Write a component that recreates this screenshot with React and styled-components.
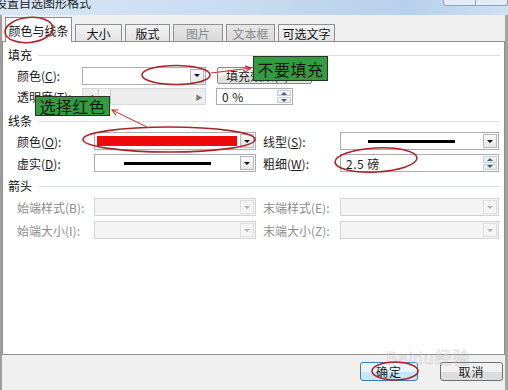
import React from "react";
import styled, { createGlobalStyle } from "styled-components";

const GlobalStyle = createGlobalStyle`
  html, body {
    margin: 0;
    padding: 0;
  }
  body {
    width: 508px;
    height: 390px;
    overflow: hidden;
    background: #f0f0f0;
    font-family: "Noto Sans CJK SC", "Liberation Sans", sans-serif;
    font-size: 12px;
    color: #1a1a1a;
  }
`;

const Window = styled.div`
  position: relative;
  width: 508px;
  height: 390px;
  display: flex;
  flex-direction: column;
  background: #f0f0f0;
  overflow: hidden;
`;

const TitleBar = styled.div`
  height: 15px;
  flex: none;
  display: flex;
  align-items: flex-end;
  overflow: hidden;
  background: linear-gradient(90deg, #d8e6f5 0%, #cadcf0 45%, #b7d0ec 80%, #cfe0f2 100%);
`;

const TitleText = styled.span`
  font-size: 12px;
  line-height: 12px;
  margin-left: -5px;
  margin-bottom: 6px;
  color: #222;
  white-space: nowrap;
`;

const TitleButtons = styled.div`
  margin-left: auto;
  align-self: flex-start;
  width: 63px;
  height: 5px;
  display: flex;
  border: 1px solid #8ea2bb;
  border-top: none;
  border-radius: 0 0 3px 3px;
  background: #e4edf7;
  span {
    flex: 1;
    border-right: 1px solid #8ea2bb;
  }
  span:last-child {
    border-right: none;
  }
`;

const Frame = styled.div`
  flex: 1;
  display: flex;
  flex-direction: column;
  border-left: 2px solid #9d9d9d;
  border-right: 3px solid #a3a3a3;
`;

const TabRow = styled.div`
  display: flex;
  align-items: flex-end;
  height: 24px;
  margin-top: 2px;
  padding-left: 3px;
`;

const Tab = styled.div`
  position: relative;
  z-index: ${(p) => (p.$active ? 1 : 0)};
  width: ${(p) => p.$w}px;
  height: ${(p) => (p.$active ? 25 : 17)}px;
  margin-bottom: ${(p) => (p.$active ? -1 : 0)}px;
  margin-left: ${(p) => (p.$first ? 0 : 3)}px;
  box-sizing: border-box;
  display: flex;
  align-items: center;
  justify-content: center;
  border: 1px solid #8e8f8f;
  border-bottom: none;
  background: ${(p) =>
    p.$active ? "#fff" : p.$disabled ? "linear-gradient(#e6e6e6, #d9d9d9)" : "linear-gradient(#f3f3f3, #e3e3e3)"};
  color: ${(p) => (p.$disabled ? "#8a8a8a" : "#111")};
  font-size: 12px;
  padding-top: ${(p) => (p.$active ? 0 : 1)}px;
`;

const Panel = styled.div`
  height: 314px;
  box-sizing: border-box;
  background: #fff;
  border: 1px solid #8e8f8f;
  display: flex;
  flex-direction: column;
`;

const SectionHead = styled.div`
  display: flex;
  align-items: center;
  gap: 6px;
  height: 14px;
  line-height: 14px;
  margin-top: ${(p) => p.$top}px;
  padding: 0 4px 0 5px;
  color: #111;
  &::after {
    content: "";
    flex: 1;
    border-top: 1px solid #dadfe3;
  }
`;

const FillRows = styled.div`
  display: flex;
  flex-direction: column;
  gap: 4px;
  margin-top: 5px;
  padding-left: 14px;
`;

const FillRow = styled.div`
  display: flex;
  align-items: center;
  height: 17px;
`;

const Grid = styled.div`
  display: grid;
  grid-template-columns: 77px 162px 7px 77px 159px;
  grid-auto-rows: 18px;
  row-gap: ${(p) => p.$gap}px;
  margin-top: ${(p) => p.$top}px;
  padding-left: 14px;
  align-items: center;
`;

const Label = styled.span`
  width: ${(p) => (p.$w ? `${p.$w}px` : "auto")};
  flex: none;
  white-space: nowrap;
  color: ${(p) => (p.$disabled ? "#8c8c8c" : "#1a1a1a")};
  u {
    text-decoration: underline;
  }
`;

const Spacer = styled.span``;

const Select = styled.div`
  display: flex;
  width: ${(p) => (p.$w ? `${p.$w}px` : "auto")};
  height: ${(p) => p.$h || 18}px;
  margin-left: ${(p) => p.$ml || 0}px;
  box-sizing: border-box;
  border: 1px solid ${(p) => (p.$disabled ? "#d3d3d3" : "#a9acb2")};
  background: ${(p) => (p.$disabled ? "#f4f4f4" : "#fff")};
`;

const SelectValue = styled.div`
  flex: 1;
  display: flex;
  align-items: center;
  justify-content: ${(p) => p.$justify || "center"};
  padding: 2px;
  min-width: 0;
`;

const DropButton = styled.div`
  width: 14px;
  flex: none;
  margin: 1px;
  box-sizing: border-box;
  border: 1px solid ${(p) => (p.$disabled ? "#dedede" : "#b8b8b8")};
  background: ${(p) => (p.$disabled ? "#f4f4f4" : "linear-gradient(#fbfbfb, #e6e6e6)")};
  display: flex;
  align-items: center;
  justify-content: center;
  &::after {
    content: "";
    border-left: 3px solid transparent;
    border-right: 3px solid transparent;
    border-top: 3px solid ${(p) => (p.$disabled ? "#b0b0b0" : "#111")};
  }
`;

const Swatch = styled.div`
  width: 100%;
  height: 10px;
  background: #ec0a0a;
`;

const LineSample = styled.div`
  width: 87px;
  height: 3px;
  background: #000;
`;

const SpinText = styled.span`
  padding-left: 3px;
  color: #1a1a1a;
  letter-spacing: 0.5px;
`;

const SpinButtons = styled.div`
  width: 14px;
  flex: none;
  margin: 1px;
  display: flex;
  flex-direction: column;
  gap: 1px;
  span {
    flex: 1;
    display: flex;
    align-items: center;
    justify-content: center;
    border: 1px solid #c6cfda;
    background: linear-gradient(#f4f7fb, #e1e8f1);
  }
  span:first-child::after {
    content: "";
    border-left: 3px solid transparent;
    border-right: 3px solid transparent;
    border-bottom: 3px solid #4d5a6a;
  }
  span:last-child::after {
    content: "";
    border-left: 3px solid transparent;
    border-right: 3px solid transparent;
    border-top: 3px solid #4d5a6a;
  }
`;

const PushButton = styled.div`
  width: 95px;
  height: 17px;
  margin-left: 11px;
  box-sizing: border-box;
  border: 1px solid #8a8a8a;
  border-radius: 2px;
  background: linear-gradient(#f4f4f4 50%, #e2e2e2 50%);
  display: flex;
  align-items: center;
  padding-left: 8px;
  white-space: nowrap;
  overflow: hidden;
`;

const Slider = styled.div`
  width: 124px;
  height: 17px;
  box-sizing: border-box;
  border: 1px solid #d8d8d8;
  background: #ececec;
  display: flex;
  align-items: stretch;
`;

const SliderPart = styled.div`
  width: ${(p) => p.$w}px;
  flex: ${(p) => (p.$w ? "none" : 1)};
  box-sizing: border-box;
  border-right: ${(p) => (p.$edge ? "1px solid #c9c9c9" : "none")};
  background: ${(p) => (p.$thumb ? "#f3f3f3" : "transparent")};
  display: flex;
  align-items: center;
  justify-content: center;
  color: #7a7a7a;
  font-size: 7px;
`;

const Footer = styled.div`
  flex: 1;
  display: flex;
  justify-content: flex-end;
  align-items: flex-start;
  gap: 22px;
  padding: 7px 2px 0 0;
`;

const DialogButton = styled.div`
  width: ${(p) => p.$w}px;
  height: 19px;
  box-sizing: border-box;
  display: flex;
  align-items: center;
  justify-content: center;
  border: 1px solid ${(p) => (p.$primary ? "#3c7fb1" : "#707070")};
  border-radius: 3px;
  background: ${(p) =>
    p.$primary ? "linear-gradient(#eaf6fd 50%, #c6e7fa 50%)" : "linear-gradient(#f2f2f2 50%, #dcdcdc 50%)"};
  color: #1a1a1a;
  letter-spacing: 1px;
`;

const Callout = styled.div`
  position: absolute;
  left: ${(p) => p.$x}px;
  top: ${(p) => p.$y}px;
  width: ${(p) => p.$w}px;
  height: ${(p) => p.$h}px;
  box-sizing: border-box;
  border: 1px solid #1d3a1f;
  background: #359b42;
  color: #0e1a0e;
  font-size: 16px;
  display: flex;
  align-items: center;
  justify-content: center;
  letter-spacing: 0.5px;
  z-index: 3;
`;

const Annotations = styled.svg`
  position: absolute;
  inset: 0;
  width: 508px;
  height: 390px;
  pointer-events: none;
  z-index: 4;
`;

const Watermark = styled.div`
  position: absolute;
  left: 386px;
  top: 344px;
  font-family: "Liberation Sans", "Noto Sans CJK SC", sans-serif;
  font-size: 17px;
  color: rgba(255, 255, 255, 0.35);
  -webkit-text-stroke: 1px rgba(150, 150, 150, 0.25);
  letter-spacing: 1px;
  z-index: 2;
`;

const Dropdown = ({ w, ml, disabled, children }) => (
  <Select $w={w} $ml={ml} $disabled={disabled}>
    <SelectValue>{children}</SelectValue>
    <DropButton $disabled={disabled} />
  </Select>
);

const Spinner = ({ w, ml, h, value }) => (
  <Select $w={w} $ml={ml} $h={h}>
    <SelectValue $justify="flex-start">
      <SpinText>{value}</SpinText>
    </SelectValue>
    <SpinButtons>
      <span />
      <span />
    </SpinButtons>
  </Select>
);

const tabs = [
  { text: "颜色与线条", w: 67, active: true },
  { text: "大小", w: 47 },
  { text: "版式", w: 45 },
  { text: "图片", w: 50, disabled: true },
  { text: "文本框", w: 49, disabled: true },
  { text: "可选文字", w: 57 },
];

export default function App() {
  return (
    <>
      <GlobalStyle />
      <Window>
        <TitleBar>
          <TitleText>设置自选图形格式</TitleText>
          <TitleButtons>
            <span />
            <span />
          </TitleButtons>
        </TitleBar>
        <Frame>
          <TabRow>
            {tabs.map((t, i) => (
              <Tab key={t.text} $w={t.w} $first={i === 0} $active={t.active} $disabled={t.disabled}>
                {t.text}
              </Tab>
            ))}
          </TabRow>
          <Panel>
            <SectionHead $top={6}>填充</SectionHead>
            <FillRows>
              <FillRow>
                <Label $w={65}>
                  颜色(<u>C</u>):
                </Label>
                <Dropdown w={124} />
                <PushButton>填充效果(F)...</PushButton>
              </FillRow>
              <FillRow>
                <Label $w={65}>
                  透明度(<u>T</u>):
                </Label>
                <Slider>
                  <SliderPart $w={16} $edge>◀</SliderPart>
                  <SliderPart $w={12} $edge $thumb />
                  <SliderPart />
                  <SliderPart $w={12}>▶</SliderPart>
                </Slider>
                <Spinner w={77} ml={10} h={17} value="0 %" />
              </FillRow>
            </FillRows>

            <SectionHead $top={9}>线条</SectionHead>
            <Grid $top={4} $gap={4}>
              <Label>
                颜色(<u>O</u>):
              </Label>
              <Dropdown>
                <Swatch />
              </Dropdown>
              <Spacer />
              <Label>
                线型(<u>S</u>):
              </Label>
              <Dropdown>
                <LineSample />
              </Dropdown>

              <Label>
                虚实(<u>D</u>):
              </Label>
              <Dropdown>
                <LineSample />
              </Dropdown>
              <Spacer />
              <Label>
                粗细(<u>W</u>):
              </Label>
              <Spinner value="2.5 磅" />
            </Grid>

            <SectionHead $top={7}>箭头</SectionHead>
            <Grid $top={5} $gap={5}>
              <Label $disabled>始端样式(B):</Label>
              <Dropdown disabled />
              <Spacer />
              <Label $disabled>末端样式(E):</Label>
              <Dropdown disabled />

              <Label $disabled>始端大小(I):</Label>
              <Dropdown disabled />
              <Spacer />
              <Label $disabled>末端大小(Z):</Label>
              <Dropdown disabled />
            </Grid>
          </Panel>
          <Footer>
            <DialogButton $w={58} $primary>
              确定
            </DialogButton>
            <DialogButton $w={63}>取消</DialogButton>
          </Footer>
        </Frame>

        <Watermark>Baidu经验</Watermark>

        <Callout $x={253} $y={56} $w={75} $h={25}>
          不要填充
        </Callout>
        <Callout $x={35} $y={96} $w={75} $h={20}>
          选择红色
        </Callout>

        <Annotations viewBox="0 0 508 390">
          <defs>
            <marker id="head" markerWidth="8" markerHeight="8" refX="6" refY="4" orient="auto" markerUnits="userSpaceOnUse">
              <path d="M0 1 L6 4 L0 7" fill="none" stroke="#b8262b" strokeWidth="1" />
            </marker>
          </defs>
          <g fill="none" stroke="#a8262b" strokeWidth="1.6">
            <ellipse cx="29" cy="30" rx="24" ry="12.5" transform="rotate(-6 29 30)" />
            <ellipse cx="176" cy="75" rx="34" ry="9.5" />
            <ellipse cx="169" cy="139.5" rx="86" ry="12.5" />
            <ellipse cx="376" cy="160" rx="41" ry="12" transform="rotate(-3 376 160)" />
            <ellipse cx="395" cy="371" rx="23" ry="9" />
          </g>
          <g stroke="#c0302f" strokeWidth="1" fill="none">
            <line x1="211" y1="73" x2="251" y2="68" markerEnd="url(#head)" />
            <line x1="149" y1="128" x2="112" y2="110" markerEnd="url(#head)" />
          </g>
        </Annotations>
      </Window>
    </>
  );
}
